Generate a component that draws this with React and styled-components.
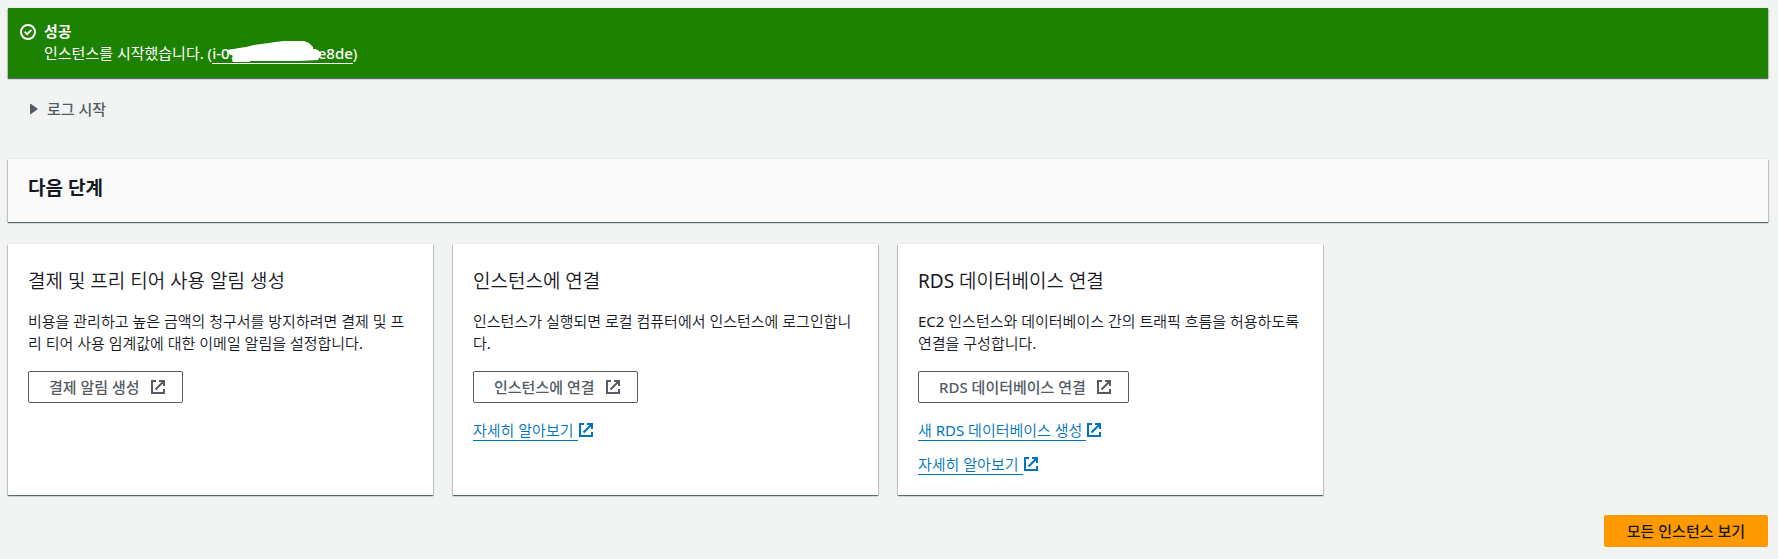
import React from "react";
import styled, { createGlobalStyle, ThemeProvider } from "styled-components";

const theme = {
  colors: {
    text: "#16191f",
    grey: "#545b64",
    link: "#0073bb",
    green: "#1d8102",
    orange: "#ff9900",
  },
  fonts: {
    light: '"Noto Sans", "Noto Sans CJK KR DemiLight", "Noto Sans CJK KR", sans-serif',
  },
  shadow:
    "0 -1px 0 0 #eaeded, 0 1px 1px 0 rgba(0, 28, 36, 0.5), 1px 1px 1px 0 rgba(0, 28, 36, 0.15), -1px 1px 1px 0 rgba(0, 28, 36, 0.15)",
};

const GlobalStyle = createGlobalStyle`
  * {
    box-sizing: border-box;
  }

  body {
    margin: 0;
    background: #f2f3f3;
  }

  body, button {
    font-family: "Noto Sans", "Noto Sans CJK KR", sans-serif;
    font-size: 15px;
    line-height: 22px;
  }
`;

const Page = styled.main`
  padding: 8px 10px 12px 8px;
  color: ${({ theme }) => theme.colors.text};
`;

const Flash = styled.section`
  display: flex;
  gap: 8px;
  padding: 12px 12px 14px;
  color: #fff;
  background: ${({ theme }) => theme.colors.green};
  box-shadow: ${({ theme }) => theme.shadow};

  > svg {
    flex: none;
    margin-top: 4px;
  }
`;

const FlashTitle = styled.h2`
  margin: 0;
  font-size: 15px;
  font-weight: 700;
  line-height: 22px;
`;

const FlashText = styled.p`
  display: flex;
  margin: 0;
  white-space: pre;
`;

const InstanceLink = styled.a`
  display: flex;
  height: 22px;
  color: inherit;
  text-decoration: none;
  font-weight: 500;
  border-bottom: 1px solid #fff;
`;

const Redacted = styled.span`
  position: relative;
  width: 71px;

  svg {
    position: absolute;
    left: -10px;
    top: -1px;
  }
`;

const LogToggle = styled.button`
  display: flex;
  align-items: center;
  gap: 9px;
  margin: 20px 0 39px;
  padding: 0 22px;
  border: 0;
  background: none;
  color: ${({ theme }) => theme.colors.grey};
  font-weight: 500;
  cursor: pointer;
`;

const StepsHeader = styled.header`
  padding: 17px 20px 22px;
  background: #fafafa;
  box-shadow: ${({ theme }) => theme.shadow};
`;

const StepsTitle = styled.h2`
  margin: 0;
  font-size: 19px;
  font-weight: 700;
  line-height: 24px;
`;

const Cards = styled.div`
  display: grid;
  grid-template-columns: repeat(4, 1fr);
  gap: 20px;
  margin: 22px 0 20px;
`;

const Card = styled.article`
  display: flex;
  flex-direction: column;
  align-items: flex-start;
  padding: 20px;
  background: #fff;
  box-shadow: ${({ theme }) => theme.shadow};
`;

const CardTitle = styled.h3`
  margin: 0 0 12px;
  font-family: ${({ theme }) => theme.fonts.light};
  font-size: 19px;
  font-weight: 400;
  line-height: 34px;
`;

const CardText = styled.p`
  margin: 0 0 17px;
  font-family: ${({ theme }) => theme.fonts.light};
  word-break: break-all;
`;

const Button = styled.button`
  display: inline-flex;
  align-items: center;
  gap: 10px;
  height: 32px;
  padding: 0 ${({ $primary }) => ($primary ? "22px" : "16px 0 20px")};
  border: 1px solid
    ${({ theme, $primary }) => ($primary ? theme.colors.orange : theme.colors.grey)};
  border-radius: 2px;
  color: ${({ theme, $primary }) => ($primary ? theme.colors.text : theme.colors.grey)};
  background: ${({ theme, $primary }) => ($primary ? theme.colors.orange : "#fff")};
  font-weight: 500;
  cursor: pointer;
`;

const LinkList = styled.div`
  display: flex;
  flex-direction: column;
  align-items: flex-start;
  gap: 12px;
  margin-top: 16px;
`;

const Link = styled.a`
  display: flex;
  align-items: center;
  color: ${({ theme }) => theme.colors.link};
  font-family: ${({ theme }) => theme.fonts.light};
  text-decoration: none;

  span {
    height: 22px;
    padding-right: 4px;
    border-bottom: 1px solid;
  }
`;

const Footer = styled.footer`
  display: flex;
  justify-content: flex-end;
`;

const ExternalIcon = () => (
  <svg width="16" height="16" viewBox="0 0 16 16" fill="none" stroke="currentColor" strokeWidth="2" aria-hidden="true">
    <path d="M9 2h5v5M5.5 10.5L14 2M14 10v4H2V2h4" />
  </svg>
);

const CheckIcon = () => (
  <svg width="16" height="16" viewBox="0 0 16 16" fill="none" stroke="currentColor" strokeWidth="2" aria-hidden="true">
    <circle cx="8" cy="8" r="7" />
    <path d="M4.7 7.7l2.5 2.4 4.2-4.2" />
  </svg>
);

const CaretIcon = () => (
  <svg width="8" height="10" viewBox="0 0 8 10" fill="currentColor" aria-hidden="true">
    <path d="M0 0h1l7 5-7 5H0z" />
  </svg>
);

const Scribble = () => (
  <svg width="93" height="21" viewBox="0 0 93 21" fill="#fff" aria-hidden="true">
    <path d="M0 9l6-1 5-1 7-1 8-2 7-1 8-1 6-1 9-1h20l5 2 4 4v2l5 1 3 3v2l-2 3-1 2-19 1H22v1H5l-1-2 1-4-4-2z" />
  </svg>
);

const cards = [
  {
    title: "결제 및 프리 티어 사용 알림 생성",
    text: "비용을 관리하고 높은 금액의 청구서를 방지하려면 결제 및 프리 티어 사용 임계값에 대한 이메일 알림을 설정합니다.",
    action: "결제 알림 생성",
    links: [],
  },
  {
    title: "인스턴스에 연결",
    text: "인스턴스가 실행되면 로컬 컴퓨터에서 인스턴스에 로그인합니다.",
    action: "인스턴스에 연결",
    links: ["자세히 알아보기"],
  },
  {
    title: "RDS 데이터베이스 연결",
    text: "EC2 인스턴스와 데이터베이스 간의 트래픽 흐름을 허용하도록 연결을 구성합니다.",
    action: "RDS 데이터베이스 연결",
    links: ["새 RDS 데이터베이스 생성", "자세히 알아보기"],
  },
];

const StepCard = ({ title, text, action, links }) => (
  <Card>
    <CardTitle>{title}</CardTitle>
    <CardText>{text}</CardText>
    <Button type="button">
      {action}
      <ExternalIcon />
    </Button>
    {links.length > 0 && (
      <LinkList>
        {links.map((label) => (
          <Link key={label} href="#">
            <span>{label}</span>
            <ExternalIcon />
          </Link>
        ))}
      </LinkList>
    )}
  </Card>
);

const App = () => (
  <ThemeProvider theme={theme}>
    <GlobalStyle />
    <Page>
      <Flash role="status">
        <CheckIcon />
        <div>
          <FlashTitle>성공</FlashTitle>
          <FlashText>
            인스턴스를 시작했습니다. (
            <InstanceLink href="#">
              i-07
              <Redacted>
                <Scribble />
              </Redacted>
              5e8de
            </InstanceLink>
            )
          </FlashText>
        </div>
      </Flash>
      <LogToggle type="button" aria-expanded="false">
        <CaretIcon />
        로그 시작
      </LogToggle>
      <StepsHeader>
        <StepsTitle>다음 단계</StepsTitle>
      </StepsHeader>
      <Cards>
        {cards.map((card) => (
          <StepCard key={card.title} {...card} />
        ))}
      </Cards>
      <Footer>
        <Button type="button" $primary>
          모든 인스턴스 보기
        </Button>
      </Footer>
    </Page>
  </ThemeProvider>
);

export default App;
